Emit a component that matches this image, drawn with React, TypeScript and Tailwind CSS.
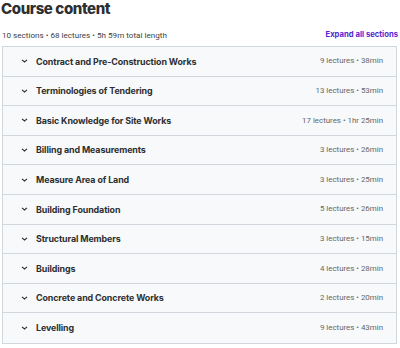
import React from 'react';

const sections = [
    { title: 'Contract and Pre-Construction Works', meta: '9 lectures • 38min' },
    { title: 'Terminologies of Tendering', meta: '13 lectures • 53min' },
    { title: 'Basic Knowledge for Site Works', meta: '17 lectures • 1hr 25min' },
    { title: 'Billing and Measurements', meta: '3 lectures • 26min' },
    { title: 'Measure Area of Land', meta: '3 lectures • 25min' },
    { title: 'Building Foundation', meta: '5 lectures • 26min' },
    { title: 'Structural Members', meta: '3 lectures • 15min' },
    { title: 'Buildings', meta: '4 lectures • 28min' },
    { title: 'Concrete and Concrete Works', meta: '2 lectures • 20min' },
    { title: 'Levelling', meta: '9 lectures • 43min' },
];

const Chevron = () => (
    <svg width="7" height="6" viewBox="0 0 7 6" className="shrink-0">
        <path d="M1 1.8 L3.5 4 L6 1.8" fill="none" stroke="#2d2f31" strokeWidth="1.1" />
    </svg>
);

const App: React.FC = () => {
    return (
        <div className="w-[400px] h-[348px] bg-white overflow-hidden font-['Inter',sans-serif] text-[#2d2f31]">
            <h2 className="text-[15px] leading-[18px] font-extrabold tracking-[-0.4px] pl-[1px] pt-[0px]">Course content</h2>

            <div className="flex items-end justify-between mt-[11px] px-[2px] h-[12px]">
                <span className="font-['Roboto',sans-serif] text-[8.1px] leading-[12px] text-[#3e4143]">10 sections • 68 lectures • 5h 59m total length</span>
                <button className="text-[7.7px] leading-[12px] font-bold text-[#5624d0]">Expand all sections</button>
            </div>

            {/* Sections list */}
            <div className="mt-[5px] ml-[2px] mr-[3px] border border-[#d1d7dc]">
                {sections.map((s, i) => (
                    <div
                        key={s.title}
                        className={`flex items-center h-[29.6px] bg-[#f7f9fa] pl-[18px] pr-[13px] ${i < sections.length - 1 ? 'border-b border-[#d1d7dc]' : ''}`}
                    >
                        <Chevron />
                        <span className="ml-[8px] flex-1 text-[8.9px] font-bold tracking-[-0.1px]">{s.title}</span>
                        <span className="font-['Roboto',sans-serif] text-[7.9px] text-[#62676b]">{s.meta}</span>
                    </div>
                ))}
            </div>
        </div>
    );
};

export default App;
